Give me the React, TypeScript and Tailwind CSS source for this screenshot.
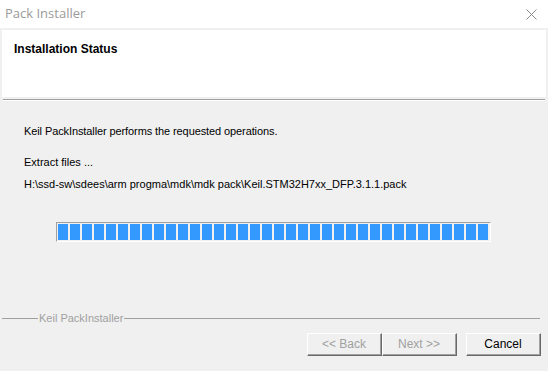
import React from "react";

const CloseIcon = () => (
  <svg width="11" height="11" viewBox="0 0 11 11" fill="none" stroke="#8a8a8a" strokeWidth="1">
    <path d="M0.5 0.5 L10.5 10.5 M10.5 0.5 L0.5 10.5" />
  </svg>
);

function WinButton({ label, disabled }: { label: string; disabled?: boolean }) {
  return (
    <div className="w-[75px] h-[23px] border-t border-l border-white border-r border-b border-r-[#696969] border-b-[#696969] bg-[#f0f0f0]">
      <div
        className={`h-full border-r border-b border-[#a0a0a0] flex items-center justify-center text-[12px] ${
          disabled ? "text-[#a0a0a0]" : "text-black"
        }`}
      >
        {label}
      </div>
    </div>
  );
}

export default function App() {
  const blocks = Array.from({ length: 36 });

  return (
    <div className="w-[548px] h-[371px] bg-[#f0f0f0] flex flex-col font-['Liberation_Sans',Arial,sans-serif] overflow-hidden">
      {/* title bar */}
      <div className="h-[28px] bg-white flex items-center justify-between pl-[5px] pr-[11px]">
        <span className="text-[13px] text-[#9a9a9a] font-['Open_Sans',sans-serif]">Pack Installer</span>
        <CloseIcon />
      </div>

      {/* header panel */}
      <div className="mx-[2px] mt-[2px] h-[67px] bg-white pl-[12px] pt-[12px]">
        <div className="text-[12px] font-bold text-black leading-[14px]">Installation Status</div>
      </div>
      <div className="mt-[2px] mx-[3px] h-[2px] border-t border-[#a0a0a0] border-b border-b-white" />

      {/* body */}
      <div className="pl-[24px] pt-[23px] text-[11px] text-black leading-[14px]">
        <div className="tracking-[-0.1px]">Keil PackInstaller performs the requested operations.</div>
        <div className="mt-[17px]">Extract files ...</div>
        <div className="mt-[8px]">H:\ssd-sw\sdees\arm progma\mdk\mdk pack\Keil.STM32H7xx_DFP.3.1.1.pack</div>
      </div>

      {/* progress bar */}
      <div className="ml-[56px] mt-[31px] w-[435px] h-[20px] border-t border-l border-[#a0a0a0] border-r border-b border-r-white border-b-white p-[1px] flex gap-[2px]">
        {blocks.map((_, i) => (
          <div key={i} className="w-[10px] h-full bg-[#3399ff]" />
        ))}
      </div>

      {/* group line */}
      <div className="mt-[69px] ml-[2px] mr-[8px] flex items-center">
        <div className="w-[36px] h-px bg-[#a0a0a0]" />
        <span className="px-[1px] text-[11px] leading-[14px] text-[#a0a0a0]">Keil PackInstaller</span>
        <div className="flex-1 h-px bg-[#a0a0a0]" />
      </div>

      {/* buttons */}
      <div className="mt-[8px] flex justify-end pr-[7px]">
        <WinButton label="<< Back" disabled />
        <WinButton label="Next >>" disabled />
        <div className="w-[9px]" />
        <WinButton label="Cancel" />
      </div>
    </div>
  );
}
